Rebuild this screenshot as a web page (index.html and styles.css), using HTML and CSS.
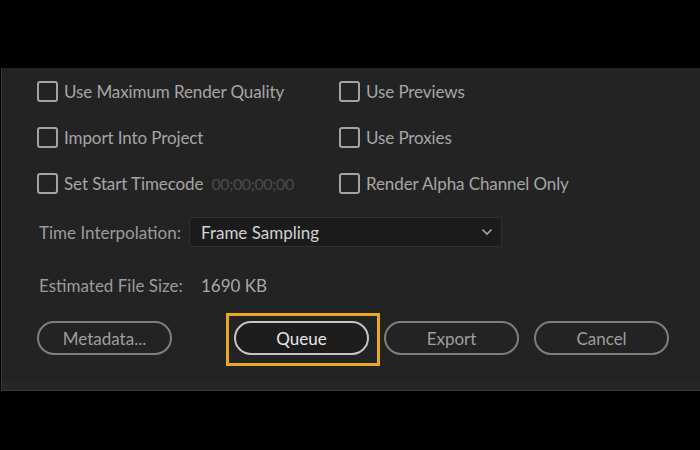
FILE: index.html
```html
<!DOCTYPE html>
<html lang="en">
<head>
    <meta charset="UTF-8">
    <meta name="viewport" content="width=device-width, initial-scale=1.0">
    <title>Export Settings</title>
    <link rel="stylesheet" href="styles.css">
</head>
<body>
    <div class="panel">
        <div class="options">
            <label class="check"><span class="box"></span>Use Maximum Render Quality</label>
            <label class="check"><span class="box"></span>Use Previews</label>
            <label class="check"><span class="box"></span>Import Into Project</label>
            <label class="check"><span class="box"></span>Use Proxies</label>
            <label class="check"><span class="box"></span>Set Start Timecode <span class="timecode">00;00;00;00</span></label>
            <label class="check"><span class="box"></span>Render Alpha Channel Only</label>
        </div>

        <div class="field">
            <span class="field-label">Time Interpolation:</span>
            <div class="select">
                <span>Frame Sampling</span>
                <svg width="12" height="8" viewBox="0 0 12 8"><path d="M1.5 1.5 L6 6 L10.5 1.5" fill="none" stroke="#a8a8a8" stroke-width="1.6"/></svg>
            </div>
        </div>

        <div class="field size">
            <span class="field-label">Estimated File Size:</span>
            <span class="value">1690 KB</span>
        </div>

        <div class="buttons">
            <button class="btn meta">Metadata...</button>
            <span class="highlight"><button class="btn queue">Queue</button></span>
            <button class="btn">Export</button>
            <button class="btn">Cancel</button>
        </div>
    </div>
    <div class="panel-foot"></div>
</body>
</html>
```

FILE: styles.css
```css
body {
    margin: 0;
    background-color: #000;
    font-family: Lato, "Open Sans", sans-serif;
    font-size: 17px;
    color: #a6a6a6;
}
.panel {
    margin: 68px 0 0 1px;
    height: 314px;
    box-sizing: border-box;
    padding: 0 31px 0 35px;
    background-color: #232323;
    border-left: 1px solid #3a3a3a;
}
.panel-foot {
    margin-left: 1px;
    height: 8px;
    background-color: #262626;
    border-left: 1px solid #3a3a3a;
    border-bottom: 1px solid #3a3a3a;
}
.options {
    display: grid;
    grid-template-columns: 302px 1fr;
    grid-auto-rows: 46px;
}
.check {
    display: flex;
    align-items: center;
    gap: 6px;
    white-space: nowrap;
    letter-spacing: -0.1px;
}
.box {
    width: 17px;
    height: 17px;
    border: 2px solid #a3a3a3;
    border-radius: 3px;
    flex-shrink: 0;
}
.timecode {
    color: #4b4b4b;
    font-size: 16px;
    letter-spacing: -0.4px;
    margin-left: 2px;
}
.field {
    display: flex;
    align-items: center;
    margin-top: 11px;
    margin-left: 2px;
}
.field-label {
    width: 150px;
    color: #9c9c9c;
}
.select {
    display: flex;
    align-items: center;
    justify-content: space-between;
    width: 313px;
    height: 30px;
    box-sizing: border-box;
    padding: 0 8px 0 11px;
    background-color: #1b1b1b;
    border: 1px solid #2f2f2f;
    border-radius: 3px;
    color: #d2d2d2;
}
.size {
    margin-top: 28px;
}
.size .field-label {
    width: 162px;
}
.value {
    color: #a8a8a8;
}
.buttons {
    display: flex;
    align-items: center;
    gap: 15px;
    margin-top: 25px;
}
.btn {
    width: 135px;
    height: 34px;
    background-color: transparent;
    border: 2px solid #7e7e7e;
    border-radius: 17px;
    color: #9e9e9e;
    font-family: Lato, "Open Sans", sans-serif;
    font-size: 17px;
    padding: 0;
}
.meta {
    margin-right: 47px;
}
.highlight {
    display: flex;
    padding: 5px 8px 8px 5px;
    margin: -8px -11px -11px -8px;
    border: 3px solid #eaa822;
}
.queue {
    background-color: #1d1d1d;
    border-color: #c4c4c4;
    color: #e6e6e6;
}
```
